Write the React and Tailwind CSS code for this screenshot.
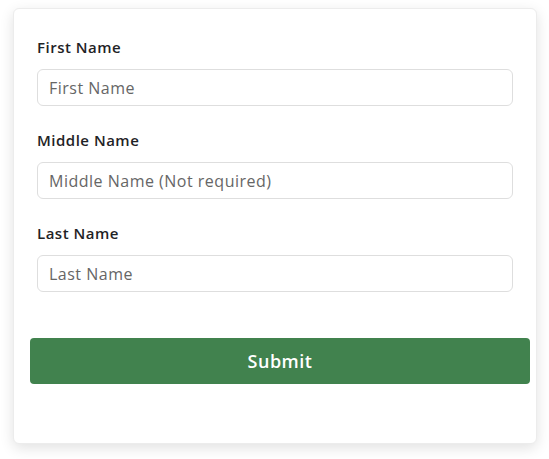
export default function App() {
  const fields = [
    { label: "First Name", ph: "First Name" },
    { label: "Middle Name", ph: "Middle Name (Not required)" },
    { label: "Last Name", ph: "Last Name" },
  ];
  return (
    <div className="min-h-screen bg-white pt-[8px] pl-[13px]" style={{ fontFamily: '"Open Sans", "Noto Sans", sans-serif' }}>
      <div className="w-[524px] h-[436px] rounded-[6px] bg-white border border-[#ececec] shadow-[0_4px_14px_rgba(0,0,0,0.12)] pt-[27px]">
        <div className="px-[23px] flex flex-col gap-[23px]">
          {fields.map((f) => (
            <div key={f.label} className="flex flex-col">
              <label className="text-[15px] leading-[22px] font-semibold tracking-[0.5px] text-[#1f2326] mb-[11px]">{f.label}</label>
              <input
                type="text"
                placeholder={f.ph}
                className="h-[37px] w-full rounded-[6px] border border-[#dedede] px-[11px] text-[16px] tracking-[0.5px] text-[#212529] placeholder:text-[#666666] outline-none"
              />
            </div>
          ))}
        </div>
        <div className="mt-[46px] ml-[16px] w-[500px]">
          <button className="w-full h-[46px] rounded-[4px] bg-[#41824e] text-white text-[18px] font-semibold tracking-[0.5px]">Submit</button>
        </div>
      </div>
    </div>
  );
}
